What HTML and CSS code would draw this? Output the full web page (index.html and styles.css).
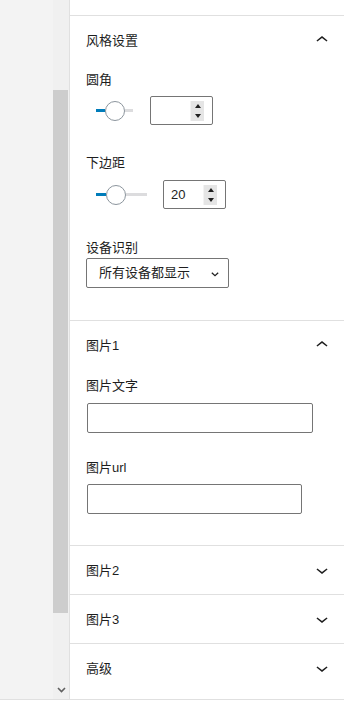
FILE: index.html
```html
<!DOCTYPE html>
<html lang="zh-CN">
<head>
    <meta charset="UTF-8">
    <meta name="viewport" content="width=device-width, initial-scale=1.0">
    <title>区块设置</title>
    <link rel="stylesheet" href="styles.css">
</head>
<body>
    <div class="app">
        <div class="sidebar"></div>
        <div class="scrollbar">
            <div class="scroll-thumb"></div>
            <div class="scroll-down">
                <svg width="9" height="6" viewBox="0 0 9 6"><path d="M1 1l3.5 3.5L8 1" fill="none" stroke="#606060" stroke-width="1.6"/></svg>
            </div>
        </div>
        <div class="panel">
            <div class="panel-top"></div>

            <div class="panel-section">
                <div class="panel-header">
                    <span>风格设置</span>
                    <svg class="chevron" width="24" height="24" viewBox="0 0 24 24"><path d="M6.5 12.4L12 8l5.5 4.4-.9 1.2L12 10l-4.6 3.6-1-1.2z"/></svg>
                </div>
                <div class="panel-body">
                    <div class="field field-range1">
                        <label class="field-label">圆角</label>
                        <div class="range-row">
                            <div class="range range-short">
                                <div class="range-fill"></div>
                                <div class="range-thumb"></div>
                                <div class="range-rest"></div>
                            </div>
                            <div class="number-input">
                                <span class="number-value"></span>
                                <div class="spinner"><span class="spin-up"></span><span class="spin-down"></span></div>
                            </div>
                        </div>
                    </div>
                    <div class="field field-range2">
                        <label class="field-label">下边距</label>
                        <div class="range-row">
                            <div class="range range-long">
                                <div class="range-fill"></div>
                                <div class="range-thumb"></div>
                                <div class="range-rest"></div>
                            </div>
                            <div class="number-input">
                                <span class="number-value">20</span>
                                <div class="spinner"><span class="spin-up"></span><span class="spin-down"></span></div>
                            </div>
                        </div>
                    </div>
                    <div class="field field-select">
                        <label class="field-label tight">设备识别</label>
                        <div class="select">
                            <span>所有设备都显示</span>
                            <svg width="8" height="5" viewBox="0 0 8 5"><path d="M0.8 0.8L4 3.8l3.2-3" fill="none" stroke="#1e1e1e" stroke-width="1.2"/></svg>
                        </div>
                    </div>
                </div>
            </div>

            <div class="panel-section">
                <div class="panel-header">
                    <span>图片1</span>
                    <svg class="chevron" width="24" height="24" viewBox="0 0 24 24"><path d="M6.5 12.4L12 8l5.5 4.4-.9 1.2L12 10l-4.6 3.6-1-1.2z"/></svg>
                </div>
                <div class="panel-body images">
                    <div class="field field-text1">
                        <label class="field-label">图片文字</label>
                        <div class="text-input"></div>
                    </div>
                    <div class="field field-text2">
                        <label class="field-label">图片url</label>
                        <div class="text-input"></div>
                    </div>
                </div>
            </div>

            <div class="panel-section">
                <div class="panel-header">
                    <span>图片2</span>
                    <svg class="chevron" width="24" height="24" viewBox="0 0 24 24"><path d="M17.5 11.6L12 16l-5.5-4.4.9-1.2L12 14l4.6-3.6 1 1.2z"/></svg>
                </div>
            </div>
            <div class="panel-section">
                <div class="panel-header">
                    <span>图片3</span>
                    <svg class="chevron" width="24" height="24" viewBox="0 0 24 24"><path d="M17.5 11.6L12 16l-5.5-4.4.9-1.2L12 14l4.6-3.6 1 1.2z"/></svg>
                </div>
            </div>
            <div class="panel-section last">
                <div class="panel-header">
                    <span>高级</span>
                    <svg class="chevron" width="24" height="24" viewBox="0 0 24 24"><path d="M17.5 11.6L12 16l-5.5-4.4.9-1.2L12 14l4.6-3.6 1 1.2z"/></svg>
                </div>
            </div>
        </div>
    </div>
</body>
</html>
```

FILE: styles.css
```css
body {
    margin: 0;
    background: #fff;
    color: #1e1e1e;
    font-family: "Liberation Sans", "Noto Sans CJK SC", sans-serif;
    font-size: 13px;
}
.app {
    display: flex;
    height: 699px;
    border-bottom: 1px solid #e0e0e0;
}
.sidebar {
    width: 53px;
    background: #f3f3f3;
}
.scrollbar {
    width: 16px;
    background: #f0f0f0;
    display: flex;
    flex-direction: column;
}
.scroll-thumb {
    width: 15px;
    height: 523px;
    margin-top: 90px;
    background: #cdcdcd;
}
.scroll-down {
    margin-top: auto;
    padding: 0 0 6px 4px;
    line-height: 0;
}
.panel {
    flex: 1;
    border-left: 1px solid #e0e0e0;
    overflow: hidden;
}
.panel-top {
    height: 15px;
    border-bottom: 1px solid #e0e0e0;
}
.panel-section {
    border-bottom: 1px solid #e0e0e0;
}
.panel-section.last {
    border-bottom: none;
}
.panel-header {
    height: 48px;
    display: flex;
    align-items: center;
    justify-content: space-between;
    padding: 0 10px 0 16px;
    line-height: 18px;
}
.panel-header span {
    padding-top: 2px;
}
.chevron {
    fill: #1e1e1e;
}
.panel-body {
    padding: 7px 16px 2px;
}
.panel-body.images {
    padding-top: 8px;
}
.field {
    margin-bottom: 30px;
}
.field-range1 {
    margin-bottom: 29px;
}
.field-select {
    margin-bottom: 30px;
}
.field-text1 {
    margin-bottom: 26px;
}
.field-text2 {
    margin-bottom: 29px;
}
.field-label {
    display: block;
    line-height: 18px;
    margin-bottom: 7px;
}
.field-label.tight {
    margin-bottom: 1px;
}
.field-text1 .field-label {
    margin-bottom: 8px;
}
.field-range2 .field-label {
    margin-bottom: 8px;
}
.range-row {
    display: flex;
    align-items: center;
}
.range {
    display: flex;
    align-items: center;
    margin-left: 10px;
}
.range-short {
    width: 37px;
    margin-right: 17px;
}
.range-long {
    width: 51px;
    margin-right: 16px;
}
.range-fill {
    width: 9px;
    height: 3px;
    background: #007cba;
}
.range-long .range-fill {
    width: 10px;
}
.range-thumb {
    width: 18px;
    height: 18px;
    border: 1px solid #8c959d;
    border-radius: 50%;
    background: #fff;
}
.range-rest {
    flex: 1;
    height: 3px;
    background: #dcdcde;
}
.number-input {
    width: 46px;
    height: 27px;
    border: 1px solid #757575;
    border-radius: 2px;
    display: flex;
    align-items: center;
    justify-content: space-between;
    padding: 0 8px 0 7px;
}
.number-value {
    line-height: 18px;
    padding-top: 1px;
}
.spinner {
    width: 13px;
    height: 20px;
    background: #e5e5e5;
    display: flex;
    flex-direction: column;
    align-items: center;
    justify-content: space-around;
    border-left: 1px solid #f3f3f3;
}
.spin-up, .spin-down {
    width: 0;
    height: 0;
    border-left: 3px solid transparent;
    border-right: 3px solid transparent;
}
.spin-up {
    border-bottom: 4px solid #202020;
}
.spin-down {
    border-top: 4px solid #202020;
}
.select {
    width: 120px;
    height: 28px;
    border: 1px solid #757575;
    border-radius: 2px;
    display: flex;
    align-items: center;
    justify-content: space-between;
    padding: 0 9px 0 12px;
    line-height: 18px;
}
.select svg {
    margin-top: 2px;
}
.text-input {
    width: 224px;
    height: 28px;
    margin-left: 1px;
    border: 1px solid #757575;
    border-radius: 2px;
}
.field-text2 .text-input {
    width: 213px;
}
```
